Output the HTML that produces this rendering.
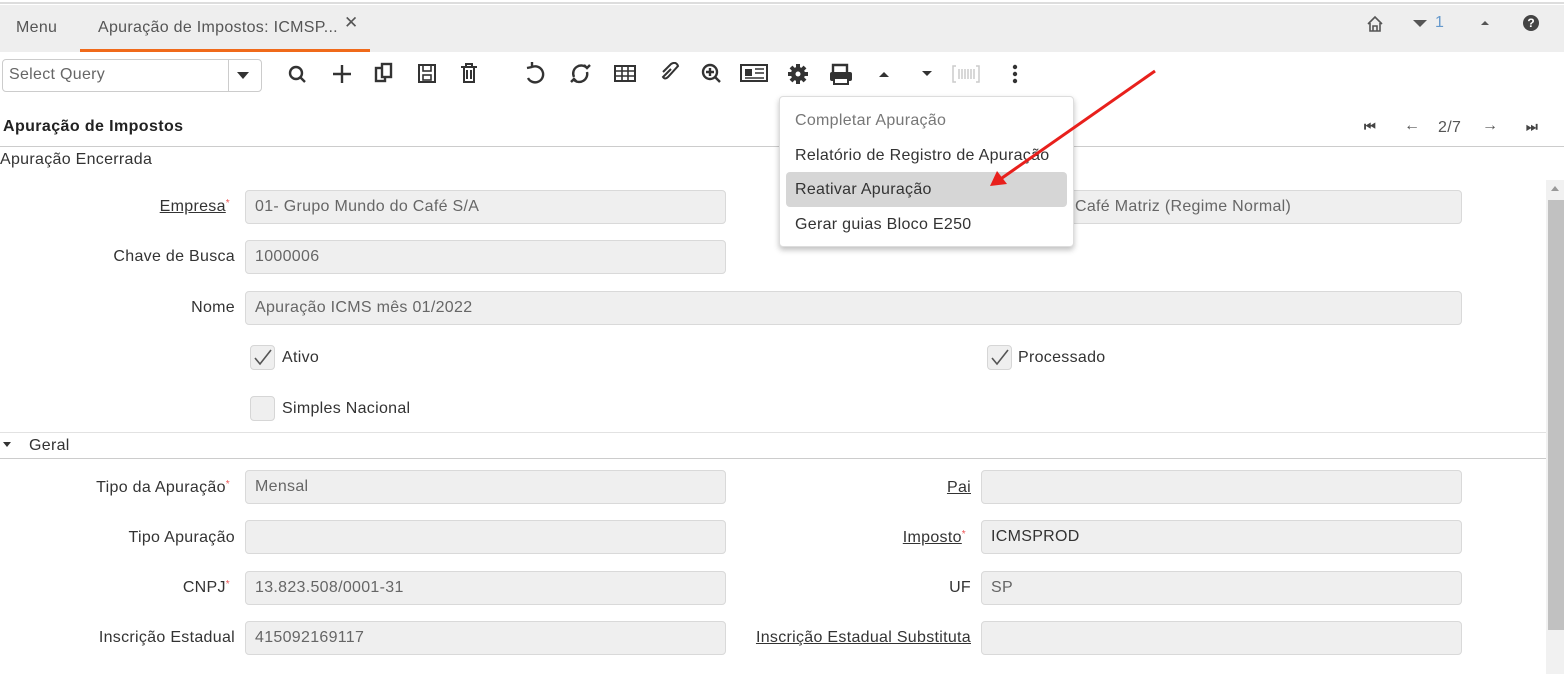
<!DOCTYPE html>
<html><head><meta charset="utf-8"><style>
*{box-sizing:border-box;margin:0;padding:0}
body{width:1564px;height:674px;overflow:hidden;background:#fff;font-family:"Liberation Sans",sans-serif;font-size:16px;letter-spacing:0.3px;color:#333;position:relative}
.a{position:absolute;white-space:nowrap}
.in{position:absolute;height:34px;background:#efefef;border:1px solid #d9d9d9;border-radius:4px;padding:7px 9px;color:#666;font-size:16px;white-space:nowrap;overflow:hidden}
.lb{position:absolute;text-align:right;color:#333;white-space:nowrap}
.lb u{text-decoration:underline}
.req{color:#e55;font-size:10px;vertical-align:top}
.cb{position:absolute;width:25px;height:25px;border:1px solid #d6d6d6;border-radius:4px;background:#efefef}
</style></head><body>
<div class="a" style="left:0;top:0;width:1564px;height:4px;background:#fff;border-bottom:2px solid #ddd"></div>
<div class="a" style="left:0;top:5px;width:1564px;height:47px;background:#eeeeee"></div>
<div class="a" style="left:16px;top:19px;color:#555">Menu</div>
<div class="a" style="left:98px;top:19px;color:#555">Apuração de Impostos: ICMSP...</div>
<div class="a" style="left:344px;top:13px;color:#555;font-size:17px">✕</div>
<div class="a" style="left:80px;top:49px;width:290px;height:3px;background:#f06a1a"></div>
<svg class="a" style="left:1366px;top:15px" width="18" height="18" viewBox="0 0 18 18"><path d="M2 9 L9 2 L16 9 M4 8 V16 H14 V8 M7 16 V11 H11 V16" fill="none" stroke="#555" stroke-width="1.6"/></svg>
<div class="a" style="left:1413px;top:20px;width:0;height:0;border-left:7px solid transparent;border-right:7px solid transparent;border-top:7px solid #555"></div>
<div class="a" style="left:1435px;top:14px;color:#69c;font-size:16px">1</div>
<div class="a" style="left:1481px;top:21px;width:0;height:0;border-left:4px solid transparent;border-right:4px solid transparent;border-bottom:4px solid #555"></div>
<div class="a" style="left:1523px;top:15px;width:16px;height:16px;border-radius:50%;background:#444;color:#fff;font-size:12px;font-weight:bold;text-align:center;line-height:16px;letter-spacing:0">?</div>

<div class="a" style="left:2px;top:59px;width:260px;height:33px;border:1px solid #ccc;border-radius:4px"></div>
<div class="a" style="left:9px;top:66px;color:#666">Select Query</div>
<div class="a" style="left:228px;top:59px;width:1px;height:33px;background:#ccc"></div>
<div class="a" style="left:237px;top:72px;width:0;height:0;border-left:6px solid transparent;border-right:6px solid transparent;border-top:7px solid #333"></div>
<svg class="a" style="left:286px;top:62px" width="750" height="28" viewBox="0 0 750 28">
<g fill="none" stroke="#333" stroke-width="2.4">
<circle cx="10" cy="11" r="6"/><path d="M14 15 L19 20"/>
<path d="M56 3 V21 M47 12 H65"/>
<rect x="90" y="6" width="9" height="13"/><rect x="96" y="2" width="9" height="13" fill="#fff"/>
<rect x="133" y="3" width="16" height="17" stroke-width="2"/><rect x="137" y="3" width="8" height="6" stroke-width="1.6"/><rect x="137" y="13" width="8" height="5" stroke-width="1.6"/>
<path d="M175 5 H191 M178 5 V20 H188 V5 M181 8 V17 M185 8 V17 M180 5 V2 H186 V5" stroke-width="2"/>
<path d="M246 5 A8 8 0 1 1 242 16 M246 5 L246 0 M246 5 L241 6"/>
<path d="M301 6 A8 8 0 0 0 288 15 M288 18 A8 8 0 0 0 301 10 M298 3 L301 6 L304 3 M285 20 L288 17 L291 20"/>
<rect x="329" y="4" width="20" height="15" stroke-width="2"/><path d="M329 9 H349 M329 14 H349 M336 4 V19 M342 4 V19" stroke-width="1.6"/>
<path d="M377 10 L385 2 Q390 -1 392 4 L382 15 Q379 18 377 15 L385 7" stroke-width="2"/>
<circle cx="424" cy="10" r="7"/><path d="M429 15 L434 20 M420 10 H428 M424 6 V14"/>
<rect x="455" y="3" width="26" height="16" stroke-width="2"/><rect x="459" y="7" width="7" height="7" fill="#333" stroke="none"/><path d="M469 7 H478 M469 11 H478 M459 16 H478" stroke-width="1.5"/>
</g>
<circle cx="512" cy="12" r="7" fill="#333"/>
<g stroke="#333" stroke-width="4"><path d="M512 2 V22 M502 12 H522 M505 5 L519 19 M519 5 L505 19"/></g>
<circle cx="512" cy="12" r="2.5" fill="#fff"/>
<path d="M547 10 V3 H561 V10" fill="none" stroke="#333" stroke-width="2.4"/><rect x="544" y="10" width="22" height="9" rx="2" fill="#333"/><rect x="548" y="16" width="14" height="6" fill="#fff" stroke="#333" stroke-width="2"/>
<path d="M593 15 L598 10 L603 15Z" fill="#333"/>
<path d="M636 9 L641 14 L646 9Z" fill="#333"/>
<g stroke="#ccc" stroke-width="1.5" fill="none"><path d="M670 4 H667 V20 H670 M690 4 H693 V20 H690 M673 7 V17 M676 7 V17 M679 7 V17 M682 7 V17 M685 7 V17 M688 7 V17"/></g>
<circle cx="729" cy="5" r="2.2" fill="#333"/><circle cx="729" cy="12" r="2.2" fill="#333"/><circle cx="729" cy="19" r="2.2" fill="#333"/>
</svg>

<div class="a" style="left:3px;top:118px;font-weight:bold;color:#222;letter-spacing:0.4px">Apuração de Impostos</div>
<div class="a" style="left:1364px;top:119px;font-size:13px;color:#444;font-weight:bold">⏮</div>
<div class="a" style="left:1404px;top:117px;color:#555">←</div>
<div class="a" style="left:1438px;top:119px;color:#555">2/7</div>
<div class="a" style="left:1482px;top:117px;color:#555">→</div>
<div class="a" style="left:1526px;top:119px;font-size:13px;color:#444;font-weight:bold">⏭</div>
<div class="a" style="left:0;top:146px;width:1564px;height:1px;background:#ccc"></div>
<div class="a" style="left:0;top:151px">Apuração Encerrada</div>

<div class="a" style="left:1546px;top:180px;width:18px;height:494px;background:#f1f1f1"></div>
<div class="a" style="left:1548px;top:200px;width:16px;height:430px;background:#c1c1c1"></div>
<div class="a" style="left:1551px;top:186px;width:0;height:0;border-left:4px solid transparent;border-right:4px solid transparent;border-bottom:5px solid #999"></div>

<div class="lb" style="right:1334px;top:198px"><u>Empresa</u><span class="req">*</span></div>
<div class="in" style="left:245px;top:190px;width:481px">01- Grupo Mundo do Café S/A</div>
<div class="in" style="left:981px;top:190px;width:481px;padding-left:93px">Café Matriz (Regime Normal)</div>
<div class="lb" style="right:1329px;top:248px">Chave de Busca</div>
<div class="in" style="left:245px;top:240px;width:481px">1000006</div>
<div class="lb" style="right:1329px;top:299px">Nome</div>
<div class="in" style="left:245px;top:291px;width:1217px">Apuração ICMS mês 01/2022</div>

<div class="cb" style="left:250px;top:345px"></div>
<svg class="a" style="left:250px;top:345px" width="25" height="25"><path d="M5 13 L10 19 L21 5" fill="none" stroke="#555" stroke-width="1.6"/></svg>
<div class="a" style="left:282px;top:349px">Ativo</div>
<div class="cb" style="left:987px;top:345px"></div>
<svg class="a" style="left:987px;top:345px" width="25" height="25"><path d="M5 13 L10 19 L21 5" fill="none" stroke="#555" stroke-width="1.6"/></svg>
<div class="a" style="left:1018px;top:349px">Processado</div>
<div class="cb" style="left:250px;top:396px"></div>
<div class="a" style="left:282px;top:400px">Simples Nacional</div>

<div class="a" style="left:0;top:432px;width:1546px;height:1px;background:#e2e2e2"></div>
<div class="a" style="left:3px;top:442px;width:0;height:0;border-left:4px solid transparent;border-right:4px solid transparent;border-top:5px solid #333"></div>
<div class="a" style="left:29px;top:437px">Geral</div>
<div class="a" style="left:0;top:458px;width:1546px;height:1px;background:#ccc"></div>

<div class="lb" style="right:1334px;top:479px">Tipo da Apuração<span class="req">*</span></div>
<div class="in" style="left:245px;top:470px;width:481px">Mensal</div>
<div class="lb" style="right:593px;top:479px"><u>Pai</u></div>
<div class="in" style="left:981px;top:470px;width:481px"></div>
<div class="lb" style="right:1329px;top:529px">Tipo Apuração</div>
<div class="in" style="left:245px;top:520px;width:481px"></div>
<div class="lb" style="right:598px;top:529px"><u>Imposto</u><span class="req">*</span></div>
<div class="in" style="left:981px;top:520px;width:481px;color:#333">ICMSPROD</div>
<div class="lb" style="right:1334px;top:579px">CNPJ<span class="req">*</span></div>
<div class="in" style="left:245px;top:571px;width:481px">13.823.508/0001-31</div>
<div class="lb" style="right:593px;top:579px">UF</div>
<div class="in" style="left:981px;top:571px;width:481px">SP</div>
<div class="lb" style="right:1329px;top:629px">Inscrição Estadual</div>
<div class="in" style="left:245px;top:621px;width:481px">415092169117</div>
<div class="lb" style="right:593px;top:629px"><u>Inscrição Estadual Substituta</u></div>
<div class="in" style="left:981px;top:621px;width:481px"></div>

<div class="a" style="left:779px;top:96px;width:295px;height:151px;background:#fff;border:1px solid #ddd;border-radius:4px;box-shadow:0 3px 6px rgba(0,0,0,.25)"></div>
<div class="a" style="left:786px;top:172px;width:281px;height:35px;background:#d6d6d6;border-radius:4px"></div>
<div class="a" style="left:795px;top:112px;color:#777">Completar Apuração</div>
<div class="a" style="left:795px;top:147px">Relatório de Registro de Apuração</div>
<div class="a" style="left:795px;top:181px">Reativar Apuração</div>
<div class="a" style="left:795px;top:216px">Gerar guias Bloco E250</div>

<svg class="a" style="left:0;top:0" width="1564" height="674"><line x1="1155" y1="71" x2="1002" y2="178" stroke="#e8201c" stroke-width="3"/><path d="M990 186 L997 171 L1007 184Z" fill="#e8201c"/></svg>
</body></html>
